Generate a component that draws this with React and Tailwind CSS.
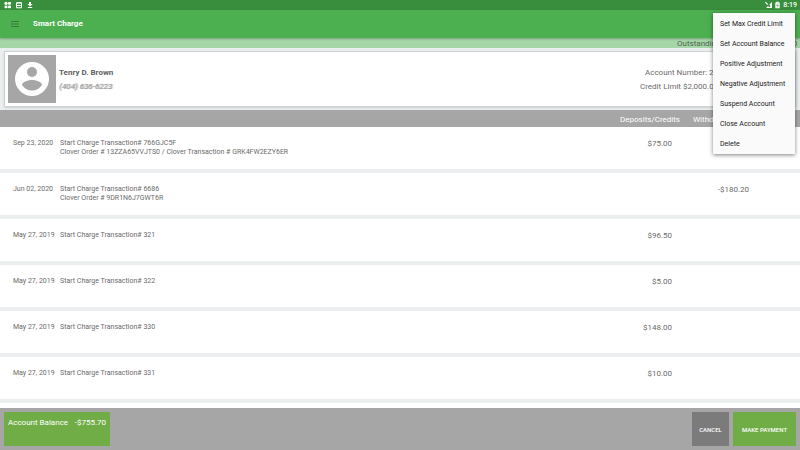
import React from "react";

const MENU_ITEMS = [
  "Set Max Credit Limit",
  "Set Account Balance",
  "Positive Adjustment",
  "Negative Adjustment",
  "Suspend Account",
  "Close Account",
  "Delete",
];

const TRANSACTIONS = [
  {
    date: "Sep 23, 2020",
    title: "Start Charge Transaction# 766GJC5F",
    detail: "Clover Order # 13ZZA65VVJTS0 / Clover Transaction # GRK4FW2EZY6ER",
    credit: "$75.00",
  },
  {
    date: "Jun 02, 2020",
    title: "Start Charge Transaction# 6686",
    detail: "Clover Order # 9DR1N6J7GWT6R",
    debit: "-$180.20",
  },
  { date: "May 27, 2019", title: "Start Charge Transaction# 321", credit: "$96.50" },
  { date: "May 27, 2019", title: "Start Charge Transaction# 322", credit: "$5.00" },
  { date: "May 27, 2019", title: "Start Charge Transaction# 330", credit: "$148.00" },
  { date: "May 27, 2019", title: "Start Charge Transaction# 331", credit: "$10.00" },
];

const StatusBar = () => (
  <div className="flex h-[10px] shrink-0 items-center justify-between bg-[#388e3c] px-[3px] text-white">
    <div className="flex items-center gap-1">
      <svg width="9" height="8" viewBox="0 0 9 8" fill="currentColor" aria-hidden="true">
        <circle cx="3" cy="2.3" r="1.6" />
        <rect x="5" y="1" width="3" height="2.8" rx="1" />
        <rect x="1.5" y="4.4" width="3" height="2.8" rx="1" />
        <rect x="5" y="4.4" width="3" height="2.8" rx="1" />
      </svg>
      <svg width="6" height="8" viewBox="0 0 6 8" aria-hidden="true">
        <path d="M.5 1.8h5v5h-5z" fill="none" stroke="currentColor" />
        <path d="M.5 4.6h5M.5 2h5" stroke="currentColor" />
      </svg>
      <svg className="ml-px" width="6" height="8" viewBox="0 0 6 8" fill="currentColor" aria-hidden="true">
        <path d="M2 1h2v2h1.6L3 5.6.4 3H2zM.8 6h4.400v1H.8z" />
      </svg>
    </div>
    <div className="flex items-center gap-[3px]">
      <svg width="7" height="8" viewBox="0 0 7 8" fill="currentColor" aria-hidden="true">
        <path d="M7 1v6H1l2-2 1.4 1.2L5.6 5 4.2 3.8z" />
        <path d="M0 1.6l.8-.8L3 3l-.9.9z" />
      </svg>
      <svg width="5" height="8" viewBox="0 0 5 8" aria-hidden="true">
        <path d="M1.5.8h2v.7h1.2v5.7H.3V1.5h1.2z" fill="currentColor" />
        <path d="M3 2.4L1.5 4.4h2L2 6.4" stroke="#388e3c" strokeWidth=".6" fill="none" />
      </svg>
      <span className="text-[7px] leading-[10px] font-medium">8:19</span>
    </div>
  </div>
);

const AppBar = () => (
  <header className="relative flex h-[28px] shrink-0 items-center bg-[#4caf50] px-[10px] shadow-[0_1px_2px_rgba(0,0,0,0.25)]">
    <button type="button" aria-label="Open navigation">
      <svg width="10" height="8" viewBox="0 0 10 8" fill="#397f3c" aria-hidden="true">
        <rect x="1" y="1" width="8" height="1" />
        <rect x="1" y="3.5" width="8" height="1" />
        <rect x="1" y="6" width="8" height="1" />
      </svg>
    </button>
    <h1 className="ml-[13px] text-[8px] leading-[12px] font-bold text-white">Smart Charge</h1>
  </header>
);

const CustomerCard = () => (
  <section className="mx-1 my-[3px] flex h-[56px] shrink-0 items-center justify-between border border-[#cfd2d2] bg-white px-[3px] shadow-sm">
    <div className="flex items-center">
      <div className="flex size-12 items-center justify-center bg-[#a6a6a6]">
        <svg width="34" height="34" viewBox="0 0 34 34" aria-hidden="true">
          <circle cx="17" cy="17" r="17" fill="#fff" />
          <circle cx="17" cy="10" r="5" fill="#a6a6a6" />
          <path d="M7 23c0-3.3 6.7-5 10-5s10 1.7 10 5c-2.2 3.5-5.8 5.6-10 5.6S9.2 26.5 7 23z" fill="#a6a6a6" />
        </svg>
      </div>
      <div className="ml-[3px] pt-[2px] leading-[14px]">
        <h2 className="text-[8px] font-bold text-[#616161]">Tenry D. Brown</h2>
        <p className="text-[8px] text-[#a0a0a0] italic text-shadow-[1px_0_1px_#a0a0a0]">(404) 636-6223</p>
      </div>
    </div>
    <div className="w-[152px] pt-[2px] text-[8px] leading-[14px] text-[#6b6b6b]">
      <p className="pl-[5px]">Account Number: 23</p>
      <p>Credit Limit $2,000.00</p>
    </div>
  </section>
);

const TransactionTable = () => (
  <div className="min-h-0 flex-1 overflow-hidden bg-white">
    <table className="w-full table-fixed border-separate border-spacing-0 text-[7px] leading-[9px] text-[#6b6b6b]">
      <colgroup>
        <col className="w-[59px]" />
        <col />
        <col className="w-[80px]" />
        <col className="w-[69px]" />
        <col className="w-[51px]" />
      </colgroup>
      <thead>
        <tr className="h-[17px] bg-[#a6a6a6] text-[8px] text-white">
          <th aria-label="Date" />
          <th aria-label="Description" />
          <th className="pt-px text-right font-normal">Deposits/Credits</th>
          <th className="pt-px pl-[13px] text-left font-normal">Withdrawals</th>
          <th aria-label="Actions" />
        </tr>
      </thead>
      <tbody className="[&_td]:border-b-4 [&_td]:border-[#eceff0] [&_td]:pt-3">
        {TRANSACTIONS.map((t) => (
          <tr key={t.title} className="h-[46px] align-top">
            <td className="pl-[13px] whitespace-nowrap">{t.date}</td>
            <td className="pl-px">
              <p>{t.title}</p>
              {t.detail && <p>{t.detail}</p>}
            </td>
            <td className="pr-2 text-right text-[8px]">{t.credit}</td>
            <td className="text-right text-[8px]">{t.debit}</td>
            <td />
          </tr>
        ))}
      </tbody>
    </table>
  </div>
);

const OverflowMenu = () => (
  <div
    role="menu"
    className="absolute top-[13px] right-[5px] flex w-[82px] flex-col bg-[#fafafa] pt-px shadow-[0_1px_4px_rgba(0,0,0,0.5)]"
  >
    {MENU_ITEMS.map((item) => (
      <button
        key={item}
        type="button"
        role="menuitem"
        className="h-5 pl-[7px] text-left text-[7px] whitespace-nowrap text-[#212121]"
      >
        {item}
      </button>
    ))}
  </div>
);

const Footer = () => (
  <footer className="flex h-[42px] shrink-0 justify-between bg-[#a6a6a6] p-1">
    <div className="flex w-[106px] justify-between bg-[#70ad47] px-1 pt-1 text-[8px] leading-[14px] text-white">
      <span>Account Balance</span>
      <span>-$755.70</span>
    </div>
    <div className="flex gap-1 text-[6px] font-medium text-white">
      <button type="button" className="w-[37px] bg-[#7b7b7b]">
        CANCEL
      </button>
      <button type="button" className="w-[63px] bg-[#70ad47]">
        MAKE PAYMENT
      </button>
    </div>
  </footer>
);

export default function App() {
  return (
    <div className="relative flex h-screen flex-col overflow-hidden bg-[#eceff0] font-['Roboto',sans-serif]">
      <StatusBar />
      <AppBar />
      <div className="flex h-[10px] shrink-0 justify-end bg-[#a5d6a7] px-[3px] text-[8px] leading-[12px] text-[#4f6350]">
        <div className="flex w-[120px] justify-between">
          <span>Outstanding Balance:</span>
          <span>-$755.70</span>
        </div>
      </div>
      <CustomerCard />
      <TransactionTable />
      <Footer />
      <OverflowMenu />
    </div>
  );
}
